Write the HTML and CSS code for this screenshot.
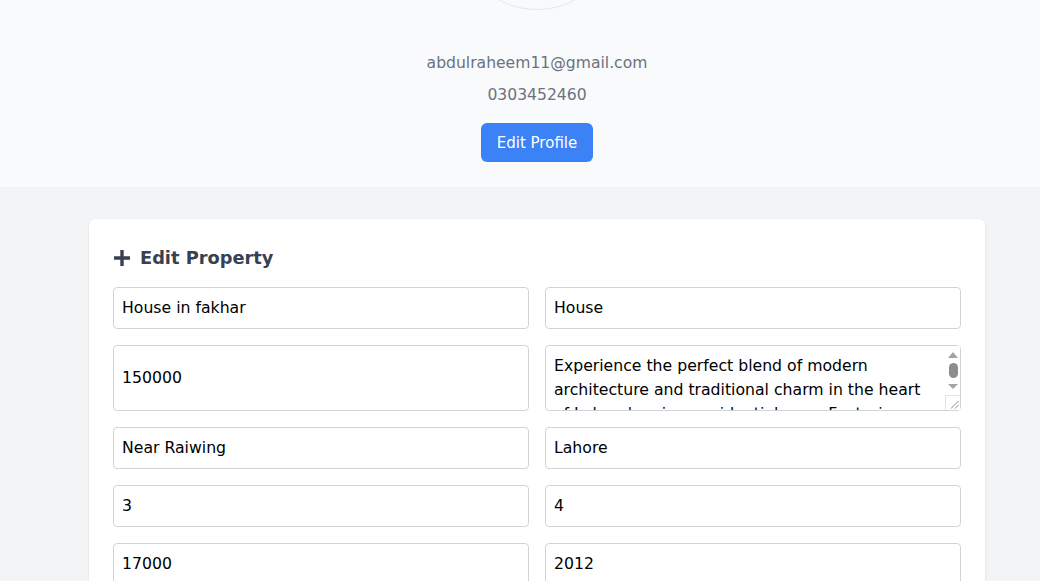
FILE: index.html
```html
<!DOCTYPE html>
<html>
<head>
<meta charset="utf-8">
<link rel="stylesheet" href="styles.css">
</head>
<body>
<div class="page">
  <section class="profile">
    <div class="avatar"></div>
    <p class="email">abdulraheem11@gmail.com</p>
    <p class="phone">0303452460</p>
    <button class="btn">Edit Profile</button>
  </section>
  <main class="main">
    <div class="card">
      <h2 class="title">
        <svg class="plus" width="18" height="18" viewBox="0 0 18 18"><path d="M9 1v16M1 9h16" stroke="#374151" stroke-width="3.4" fill="none"/></svg>
        Edit Property
      </h2>
      <form class="grid">
        <input class="field" value="House in fakhar">
        <input class="field" value="House">
        <input class="field" value="150000">
        <div class="area-wrap">
          <textarea class="field area" rows="2">Experience the perfect blend of modern architecture and traditional charm in the heart of Lahore's prime residential area. Featuring spacious rooms, a beautiful garden, and modern amenities, this house is ideal for families looking for comfort and style.</textarea>
          <div class="sbar">
            <span class="arrow up"></span>
            <span class="thumb"></span>
            <span class="arrow down"></span>
          </div>
          <div class="corner">
            <svg width="14" height="14" viewBox="0 0 14 14"><path d="M5 12.5L12.5 5M9 12.5L12.5 9" stroke="#8a8a8a" stroke-width="1" fill="none"/></svg>
          </div>
        </div>
        <input class="field" value="Near Raiwing">
        <input class="field" value="Lahore">
        <input class="field" value="3">
        <input class="field" value="4">
        <input class="field" value="17000">
        <input class="field" value="2012">
      </form>
    </div>
  </main>
</div>
</body>
</html>
```
FILE: styles.css
```css
* { box-sizing: border-box; }
html, body { margin: 0; padding: 0; }
body {
  font-family: "DejaVu Sans", "Open Sans", sans-serif;
  background: #f3f4f6;
  color: #111827;
  overflow: hidden;
}
.profile {
  background: #f9fafb;
  display: flex;
  flex-direction: column;
  align-items: center;
  padding: 0 0 25px 34px;
  margin-top: -150px;
}
.avatar {
  width: 160px;
  height: 160px;
  border-radius: 50%;
  border: 1px solid #e5e7eb;
  margin-bottom: 41px;
}
.email, .phone {
  margin: 0;
  font-size: 15.6px;
  line-height: 24px;
  color: #6b7280;
}
.phone { margin-top: 8px; }
.btn {
  margin-top: 16px;
  font-family: inherit;
  font-size: 15px;
  color: #fff;
  background: #3b82f6;
  border: none;
  border-radius: 6px;
  height: 39px;
  padding: 0 16px;
}
.main {
  padding: 32px 55px 0 89px;
}
.card {
  background: #fff;
  border-radius: 6px;
  box-shadow: 0 1px 3px rgba(0,0,0,0.08), 0 1px 2px rgba(0,0,0,0.04);
  padding: 24px;
  max-width: 896px;
}
.title {
  margin: 0 0 16px;
  font-size: 17.8px;
  line-height: 28px;
  font-weight: 700;
  color: #374151;
  display: flex;
  align-items: center;
  gap: 9px;
  position: relative;
  top: 1px;
}
.grid {
  display: grid;
  grid-template-columns: 1fr 1fr;
  gap: 16px;
}
.field {
  font-family: inherit;
  font-size: 15.7px;
  line-height: 24px;
  color: #000;
  border: 1px solid #d1d5db;
  border-radius: 4px;
  padding: 8px;
  width: 100%;
  background: #fff;
}
input.field { min-height: 42px; }
.area-wrap {
  position: relative;
}
.area {
  height: 66px;
  resize: none;
  display: block;
  overflow: hidden;
  padding-right: 23px;
}
.sbar {
  position: absolute;
  top: 1px;
  right: 1px;
  width: 14px;
  height: 49px;
  display: flex;
  flex-direction: column;
  align-items: center;
  background: #fff;
}
.arrow {
  display: block;
  width: 0;
  height: 0;
  border-left: 5px solid transparent;
  border-right: 5px solid transparent;
}
.arrow.up {
  margin-top: 6px;
  border-bottom: 6px solid #a3a3a3;
}
.thumb {
  display: block;
  width: 9px;
  height: 15px;
  border-radius: 5px;
  background: #8c8c8c;
  margin-top: 5px;
}
.arrow.down {
  margin-top: 6px;
  border-top: 5px solid #a3a3a3;
}
.corner {
  position: absolute;
  right: 1px;
  bottom: 1px;
  width: 15px;
  height: 15px;
  border-left: 1px solid #e3e3e3;
  border-top: 1px solid #e3e3e3;
  background: #fff;
  display: flex;
}
```
